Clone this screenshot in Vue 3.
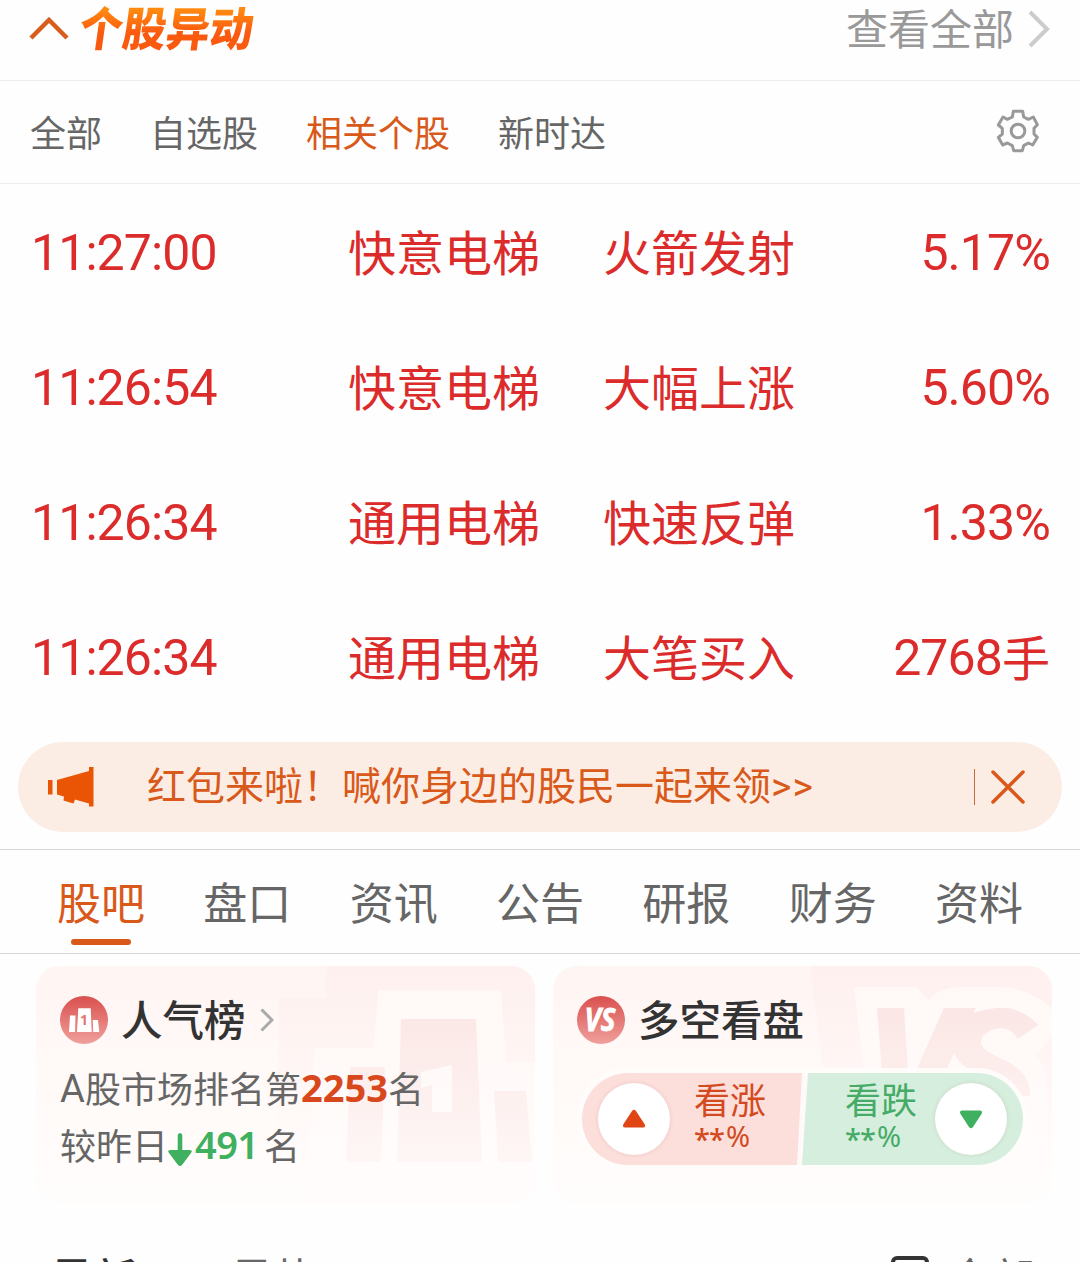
<template>
  <div class="page">
    <header class="header">
      <div class="header-left">
        <svg class="fold" width="40" height="24" viewBox="0 0 40 24">
          <path d="M2 21L20 3L38 21" />
        </svg>
        <h1 class="title">个股异动</h1>
      </div>
      <div class="more">
        <span class="more-text">查看全部</span>
        <svg width="22" height="38" viewBox="0 0 22 38">
          <path d="M2 2L19 19L2 36" />
        </svg>
      </div>
    </header>

    <nav class="filters">
      <span
        v-for="item in filters"
        :key="item"
        class="filter"
        :class="{ active: item === activeFilter }"
        @click="activeFilter = item"
        >{{ item }}</span
      >
      <svg class="gear" width="43" height="44" viewBox="588 327 129 132">
        <path
          d="M640 334H668L671 351L685 358L700 351L712 374L702 385V402L712 412L698 435L685 429L671 437L667 452H641L637 437L622 429L608 435L595 412L607 402V385L595 375L609 351L622 358L637 351Z"
        />
        <circle cx="654" cy="393" r="20.5" />
      </svg>
    </nav>

    <ul class="list">
      <li v-for="(row, i) in rows" :key="i" class="row">
        <span class="num">{{ row.time }}</span>
        <span class="text">{{ row.name }}</span>
        <span class="text">{{ row.action }}</span>
        <span class="value"
          ><span class="num">{{ row.value }}</span
          ><span v-if="row.unit" class="text">{{ row.unit }}</span></span
        >
      </li>
    </ul>

    <div class="banner">
      <svg class="horn" width="46" height="40" viewBox="0 0 46 40">
        <path d="M0 13H4.5V27.500H0ZM9 13L41 4V0H45.500V39.500H41V36.500L27 32.500L25.500 36.500L15.500 33.500L16 29.500L9 27.500Z" />
      </svg>
      <span class="banner-text">红包来啦！喊你身边的股民一起来领<b>&gt;&gt;</b></span>
      <span class="banner-line"></span>
      <svg class="close" width="34" height="34" viewBox="0 0 34 34">
        <path d="M2 2L32 32M32 2L2 32" />
      </svg>
    </div>

    <nav class="tabs">
      <span
        v-for="tab in tabs"
        :key="tab"
        class="tab"
        :class="{ active: tab === activeTab }"
        @click="activeTab = tab"
        >{{ tab }}</span
      >
    </nav>

    <section class="cards">
      <div class="card">
        <svg class="card-bg" width="499" height="238" viewBox="0 0 499 238">
          <defs>
            <linearGradient id="fade" x1="0" y1="0" x2="0" y2="238" gradientUnits="userSpaceOnUse">
              <stop offset="0" stop-color="#fef0ee" />
              <stop offset="0.85" stop-color="#fffcfb" />
            </linearGradient>
            <linearGradient id="light" x1="0" y1="0" x2="0" y2="238" gradientUnits="userSpaceOnUse">
              <stop offset="0" stop-color="#fff8f6" />
              <stop offset="0.8" stop-color="#fffcfb" />
            </linearGradient>
            <linearGradient id="deep" x1="0" y1="50" x2="0" y2="200" gradientUnits="userSpaceOnUse">
              <stop offset="0" stop-color="#fbe8e6" />
              <stop offset="1" stop-color="#fef7f6" />
            </linearGradient>
          </defs>
          <path fill="url(#fade)" d="M291 0H499V203H240L243 32H289Z" />
          <path fill="url(#light)" d="M342 24H465L470 96H499V238H272L278 82H338Z" />
          <path fill="url(#deep)" d="M365 53H440L446 196H361ZM314 101H349L345 196H310ZM458 125H490L496 196H462Z" />
          <path fill="url(#light)" d="M385 106L416 99V146H396V119L385 122Z" />
        </svg>
        <div class="card-head">
          <svg width="48" height="48" viewBox="0 0 48 48">
            <defs>
              <linearGradient id="badge" x1="0" y1="0" x2="0" y2="1">
                <stop offset="0" stop-color="#d9504e" />
                <stop offset="1" stop-color="#f0a09c" />
              </linearGradient>
            </defs>
            <circle cx="24" cy="24" r="24" fill="url(#badge)" />
            <path fill="#fff" d="M10 19.500H15.500L15 36H9ZM18.300 12.300H30.700L31.700 36H17ZM32.700 24H38L39.300 36H33.300Z" />
            <text class="badge-one" x="24" y="28.500" text-anchor="middle">1</text>
          </svg>
          <h2>人气榜</h2>
          <svg class="card-arrow" width="14" height="24" viewBox="0 0 14 24">
            <path d="M1.500 1.500L12 12L1.500 22.500" />
          </svg>
        </div>
        <p class="rank"><span class="letter">A</span><span>股市场排名第</span><b class="rank-num">2253</b><span>名</span></p>
        <p class="change">
          <span>较昨日</span>
          <svg class="down" width="24" height="34" viewBox="0 0 24 34">
            <path d="M9.700 2.500Q9.700 0 12 0Q14.300 0 14.300 2.500V17H22Q25 17.500 23 20L14 32Q12 34 10 32L1 20Q-1 17.500 2 17H9.700Z" />
          </svg>
          <b class="change-num">491</b>
          <span>名</span>
        </p>
      </div>

      <div class="card">
        <svg class="card-bg" width="499" height="238" viewBox="0 0 499 238">
          <path fill="url(#fade)" d="M257 0H499V203H286L270 102Z" />
          <path fill="url(#light)" d="M301 21H363L376 34Q386 21 408 21H447Q478 22 499 43V70L482 89Q494 98 495 130V203H322Z" />
          <path
            fill="url(#deep)"
            d="M324 42H351L355 107H329ZM391 42H423L420 47Q440 41 455 42Q473 45 485 59L465 73Q458 62 447 62Q428 65 428 77Q429 84 447 92Q478 105 477 130H430L425 107Q408 102 401 87L392 107H362Z"
          />
        </svg>
        <div class="card-head">
          <svg width="48" height="48" viewBox="0 0 48 48">
            <circle cx="24" cy="24" r="24" fill="url(#badge)" />
            <text class="badge-vs" x="7.500" y="35" textLength="31" lengthAdjust="spacingAndGlyphs">VS</text>
          </svg>
          <h2>多空看盘</h2>
        </div>
        <div class="vote">
          <div class="side up">
            <span class="knob">
              <svg width="24" height="20" viewBox="0 0 24 20">
                <path d="M10 2Q12 -0.500 14 2L22.500 15Q24 18.500 21 18.500H3Q0 18.500 1.500 15Z" />
              </svg>
            </span>
            <span class="vote-text"
              ><span>看涨</span><small><i>**</i>%</small></span
            >
          </div>
          <div class="side fall">
            <span class="vote-text"
              ><span>看跌</span><small><i>**</i>%</small></span
            >
            <span class="knob">
              <svg width="24" height="20" viewBox="0 0 24 20">
                <path d="M10 18Q12 20.500 14 18L22.500 5Q24 1.500 21 1.500H3Q0 1.500 1.500 5Z" />
              </svg>
            </span>
          </div>
        </div>
      </div>
    </section>

    <footer class="sort">
      <span class="sort-item current">最新</span>
      <span class="sort-item">最热</span>
      <span class="checkbox"></span>
      <span class="sort-all">全部</span>
    </footer>
  </div>
</template>

<script setup>
import { ref } from "vue";

const filters = ["全部", "自选股", "相关个股", "新时达"];
const activeFilter = ref("相关个股");

const tabs = ["股吧", "盘口", "资讯", "公告", "研报", "财务", "资料"];
const activeTab = ref("股吧");

const rows = [
  { time: "11:27:00", name: "快意电梯", action: "火箭发射", value: "5.17%" },
  { time: "11:26:54", name: "快意电梯", action: "大幅上涨", value: "5.60%" },
  { time: "11:26:34", name: "通用电梯", action: "快速反弹", value: "1.33%" },
  { time: "11:26:34", name: "通用电梯", action: "大笔买入", value: "2768", unit: "手" },
];
</script>

<style>
body {
  margin: 0;
  background: #fefefe;
}
</style>

<style scoped>
.page {
  width: 1080px;
  height: 1262px;
  overflow: hidden;
  display: flex;
  flex-direction: column;
  background: #fefefe;
  color: #666;
  font-family: "Noto Sans CJK SC", sans-serif;
}

svg {
  display: block;
  flex: none;
}

h1,
h2,
p,
ul {
  margin: 0;
  padding: 0;
}

i {
  font-style: normal;
}

.header {
  box-sizing: border-box;
  height: 81px;
  flex: none;
  display: flex;
  justify-content: space-between;
  padding: 0 30px 0 29px;
  border-bottom: 1px solid #eee;
}

.header-left,
.more {
  display: flex;
  align-items: center;
  height: 58px;
}

.fold {
  fill: none;
  stroke: #d85c1c;
  stroke-width: 4.5;
}

.title {
  margin: 0 0 5px 11px;
  font-size: 43.5px;
  line-height: 54px;
  font-weight: 900;
  transform: skewX(-8deg) scaleY(1.07);
  color: transparent;
  background: linear-gradient(#ff8a10 20%, #fa5a10 60%);
  background-clip: text;
}

.more {
  gap: 14px;
  color: #999;

  svg {
    fill: none;
    stroke: #ccc;
    stroke-width: 4;
  }
}

.more-text {
  padding-bottom: 4px;
  font-size: 42px;
  line-height: 54px;
}

.filters {
  box-sizing: border-box;
  height: 103px;
  flex: none;
  display: flex;
  align-items: center;
  gap: 48px;
  padding: 0 41px 0 30px;
  border-bottom: 1px solid #eee;
  font-size: 36px;

  .active {
    color: #d8591a;
  }
}

.filter {
  padding-bottom: 3px;
}

.gear {
  margin-left: auto;
  margin-bottom: 3px;
  fill: none;
  stroke: #999;
  stroke-width: 9;
  stroke-linejoin: round;
}

.list {
  list-style: none;
  padding: 1px 30px 17px 31px;
}

.row {
  height: 135px;
  display: grid;
  grid-template-columns: 317px 255px 1fr auto;
  align-items: center;
  color: #dc2b2b;
}

.text {
  padding-bottom: 5px;
  font-size: 48px;
  line-height: 60px;
}

.num {
  font-family: Roboto, sans-serif;
  font-size: 50px;
  line-height: 60px;
  letter-spacing: -0.9px;
}

.value {
  display: flex;
  align-items: center;
}

.banner {
  height: 90px;
  flex: none;
  box-sizing: border-box;
  margin: 0 18px 17px;
  padding: 0 37.5px 0 30px;
  border-radius: 45px;
  background: #fcede4;
  display: flex;
  align-items: center;
  color: #d8591a;
}

.horn {
  fill: #e95504;
}

.banner-text {
  margin-left: 53px;
  padding-bottom: 4px;
  font-size: 39px;
  line-height: 50px;

  b {
    font-family: Roboto, sans-serif;
    font-weight: 400;
    letter-spacing: 1.2px;
  }
}

.banner-line {
  width: 1px;
  height: 36px;
  margin-left: auto;
  background: #c9683a;
}

.close {
  margin-left: 15.5px;
  fill: none;
  stroke: #d8591a;
  stroke-width: 3.5;
  stroke-linecap: round;
}

.tabs {
  box-sizing: border-box;
  height: 105px;
  flex: none;
  display: flex;
  justify-content: space-between;
  padding: 0 57px;
  border-top: 1px solid #d6d6d6;
  border-bottom: 1px solid #d6d6d6;
  font-size: 44px;
  line-height: 103px;
}

.tab.active {
  position: relative;
  color: #d8591a;
}

.tab.active::after {
  content: "";
  position: absolute;
  left: 14px;
  bottom: 8px;
  width: 60px;
  height: 6px;
  border-radius: 3px;
  background: #d8591a;
}

.cards {
  display: flex;
  gap: 18px;
  padding: 12px 28px 0 36px;
}

.card {
  position: relative;
  box-sizing: border-box;
  width: 499px;
  height: 238px;
  padding: 30px 24px 0;
  border-radius: 24px;
  overflow: hidden;
  background: linear-gradient(#fff5f3, #fffaf8 50%, #fffdfc);
}

.card-bg {
  position: absolute;
  left: 0;
  top: 0;
}

.card-head {
  position: relative;
  display: flex;
  align-items: center;
  height: 48px;

  h2 {
    margin-left: 13px;
    padding-bottom: 5px;
    font-size: 41.5px;
    line-height: 48px;
    font-weight: 500;
    color: #333;
  }
}

.badge-one {
  font: 700 14px "Noto Sans", sans-serif;
  fill: #e27573;
}

.badge-vs {
  font: italic 700 32px "Open Sans", sans-serif;
  fill: #fff;
  stroke: #fff;
  stroke-width: 0.8;
}

.card-arrow {
  margin-left: 14px;
  fill: none;
  stroke: #aaa;
  stroke-width: 3;
}

.rank,
.change {
  position: relative;
  display: flex;
  align-items: center;
  height: 57px;
  font-size: 36px;
  line-height: 48px;

  span {
    padding-bottom: 4px;
  }
}

.rank {
  margin-top: 16px;
}

.rank .letter {
  width: 25px;
  padding-bottom: 0;
  font-family: Roboto, sans-serif;
  font-size: 38px;
}

.rank-num {
  width: 87px;
  padding-bottom: 4px;
  font-family: "Noto Sans", sans-serif;
  font-size: 38px;
  color: #d9481c;
}

.down {
  margin: 8px 3px 0 0;
  fill: #3faf60;
}

.change-num {
  width: 69px;
  padding-bottom: 4px;
  font-family: "Noto Sans", sans-serif;
  font-size: 38px;
  font-weight: 600;
  letter-spacing: -0.6px;
  color: #3faf60;
}

.vote {
  position: relative;
  display: flex;
  width: 441px;
  height: 92px;
  margin: 29px 0 0 5px;
  border-radius: 46px;
  background: #fffaf9;
  box-shadow: 0 0 0 5px rgba(255, 253, 252, 0.85);
  overflow: hidden;
}

.side {
  box-sizing: border-box;
  width: 220px;
  display: flex;
  align-items: center;
}

.up {
  padding-left: 16px;
  gap: 24px;
  background: #fcdedb;
  color: #d34a1f;
  fill: #e04514;
  clip-path: polygon(0 0, 100% 0, 215px 100%, 0 100%);
}

.fall {
  width: 221px;
  padding-right: 16px;
  gap: 18px;
  justify-content: flex-end;
  background: #d6eedd;
  color: #45ab66;
  fill: #3faf60;
  clip-path: polygon(6px 0, 100% 0, 100% 100%, 0 100%);
}

.knob {
  width: 72px;
  height: 72px;
  border-radius: 50%;
  background: #fff;
  display: flex;
  align-items: center;
  justify-content: center;
  box-shadow: 0 0 4px rgba(120, 60, 50, 0.12);
}

.vote-text {
  display: flex;
  flex-direction: column;
  width: 72px;
  padding-bottom: 8px;
  font-size: 36px;
  line-height: 42px;

  small {
    display: flex;
    font-family: "Noto Sans", sans-serif;
    font-size: 29px;
    line-height: 34px;
    white-space: nowrap;
  }

  i {
    width: 32px;
    height: 26px;
    padding-top: 3px;
    font-weight: 500;
    letter-spacing: -1px;
  }
}

.sort {
  display: flex;
  align-items: flex-start;
  margin-top: 52px;
  padding: 0 45px 0 50px;
  font-size: 43.5px;
  line-height: 41px;
}

.sort-item {
  margin-right: 93px;
}

.current {
  color: #333;
  font-weight: 500;
}

.checkbox {
  box-sizing: border-box;
  width: 38px;
  height: 38px;
  margin-left: auto;
  border: 4px solid #333;
  border-radius: 6px;
}

.sort-all {
  margin-left: 19px;
}
</style>
